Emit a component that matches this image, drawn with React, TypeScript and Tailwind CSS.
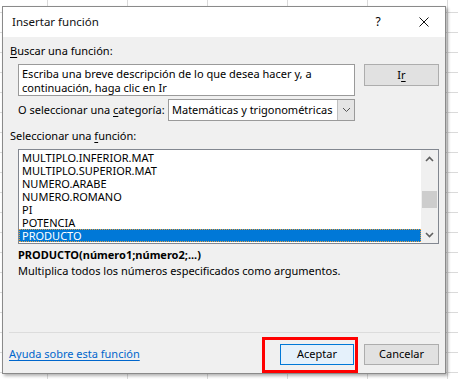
import React from "react";

const items = [
  "MULTIPLO.INFERIOR.MAT",
  "MULTIPLO.SUPERIOR.MAT",
  "NUMERO.ARABE",
  "NUMERO.ROMANO",
  "PI",
  "POTENCIA",
  "PRODUCTO",
];

function Chevron({ up }: { up?: boolean }) {
  return (
    <svg width="9" height="6" viewBox="0 0 9 6">
      <path
        d={up ? "M1 5 L4.5 1.5 L8 5" : "M1 1 L4.5 4.5 L8 1"}
        fill="none"
        stroke="#606060"
        strokeWidth="1.6"
      />
    </svg>
  );
}

export default function App() {
  return (
    <div className="w-[458px] h-[379px] overflow-hidden bg-white pt-[6px] pl-[2px] bg-[linear-gradient(to_right,#dadada_1px,transparent_1px),linear-gradient(to_bottom,#dadada_1px,transparent_1px)] bg-size-[80px_20px] bg-position-[47px_12px] font-['Noto_Sans',sans-serif] text-[11px] text-black">
      <div className="w-[444px] h-[368px] border border-[#8a8a8a] bg-[#f0f0f0] shadow-[2px_2px_3px_rgba(0,0,0,0.3)] flex flex-col">
        {/* Title bar */}
        <div className="h-[30px] bg-white flex items-center pl-[9px] pr-[16px] shrink-0">
          <span className="text-[11.5px] text-[#111]">Insertar función</span>
          <span className="ml-auto w-[20px] text-center text-[12px]">?</span>
          <span className="ml-[31px] w-[10px] h-[10px] flex">
            <svg width="10" height="10" viewBox="0 0 10 10">
              <path d="M0.5 0.5 L9.5 9.5 M9.5 0.5 L0.5 9.5" stroke="#111" strokeWidth="1" />
            </svg>
          </span>
        </div>

        {/* Body */}
        <div className="flex flex-col flex-1 relative">
          <div className="ml-[7px] mt-[6px] h-[16px] leading-[16px]">
            <u className="underline-offset-2">B</u>uscar una función:
          </div>

          <div className="flex mt-[5px] ml-[15px]">
            <div className="w-[337px] h-[32px] bg-white border border-[#9a9a9a] pl-[3px] pt-[2px] leading-[13.5px]">
              Escriba una breve descripción de lo que desea hacer y, a
              <br />
              continuación, haga clic en Ir
            </div>
            <div className="ml-[9px] w-[75px] h-[22px] bg-[#e1e1e1] border border-[#adadad] flex items-center justify-center">
              <span>
                I<u className="underline-offset-2">r</u>
              </span>
            </div>
          </div>

          <div className="flex items-center mt-[3px] ml-[15px]">
            <div className="w-[150px] whitespace-nowrap">
              O seleccionar una <u className="underline-offset-2">c</u>ategoría:
            </div>
            <div className="w-[187px] h-[22px] bg-white border border-[#9a9a9a] flex">
              <div className="flex-1 flex items-center pl-[3px] whitespace-nowrap">Matemáticas y trigonométricas</div>
              <div className="w-[17px] bg-[#e5e5e5] border-l border-[#c0c0c0] flex items-center justify-center">
                <svg width="9" height="6" viewBox="0 0 9 6">
                  <path d="M1 1 L4.5 4.5 L8 1" fill="none" stroke="#555" strokeWidth="1" />
                </svg>
              </div>
            </div>
          </div>

          <div className="ml-[7px] mt-[7px] h-[16px] leading-[16px]">
            Seleccionar una <u className="underline-offset-2">f</u>unción:
          </div>

          <div className="ml-[15px] mt-[5px] w-[421px] h-[95px] bg-white border border-[#828790] flex">
            <div className="flex-1 pt-[1px]">
              {items.map((it) => (
                <div
                  key={it}
                  className={
                    it === "PRODUCTO"
                      ? "h-[13px] leading-[13px] pl-[3px] bg-[#0078d7] text-white outline outline-1 outline-dotted outline-[#e8a040] -outline-offset-1"
                      : "h-[13px] leading-[13px] pl-[3px]"
                  }
                >
                  {it}
                </div>
              ))}
            </div>
            <div className="w-[17px] bg-[#f0f0f0] flex flex-col">
              <div className="h-[17px] flex items-center justify-center">
                <Chevron up />
              </div>
              <div className="flex-1 relative">
                <div className="absolute left-[1px] right-[1px] top-[24px] h-[17px] bg-[#cdcdcd]" />
              </div>
              <div className="h-[17px] flex items-center justify-center">
                <Chevron />
              </div>
            </div>
          </div>

          <div className="ml-[15px] mt-[3px] h-[16px] leading-[16px] font-bold">
            PRODUCTO(número1;número2;...)
          </div>
          <div className="ml-[15px] h-[16px] leading-[16px]">
            Multiplica todos los números especificados como argumentos.
          </div>

          <div className="ml-[6px] mt-[53px] w-[431px] h-[1px] bg-[#dcdcdc]" />

          <div className="flex items-center mt-[11px] ml-[6px] h-[21px]">
            <span className="text-[#0066cc] underline underline-offset-2">Ayuda sobre esta función</span>
            <div className="ml-auto relative w-[74px] h-[21px]">
              <div className="absolute left-[-18px] top-[-7px] w-[96px] h-[36px] border-[3px] border-[#f00]" />
              <div className="w-[74px] h-[21px] bg-[#e5f1fb] border border-[#0078d7] flex items-center justify-center">
                Aceptar
              </div>
            </div>
            <div className="ml-[10px] mr-[6px] w-[75px] h-[21px] bg-[#e1e1e1] border border-[#adadad] flex items-center justify-center">
              Cancelar
            </div>
          </div>
        </div>
      </div>
    </div>
  );
}
